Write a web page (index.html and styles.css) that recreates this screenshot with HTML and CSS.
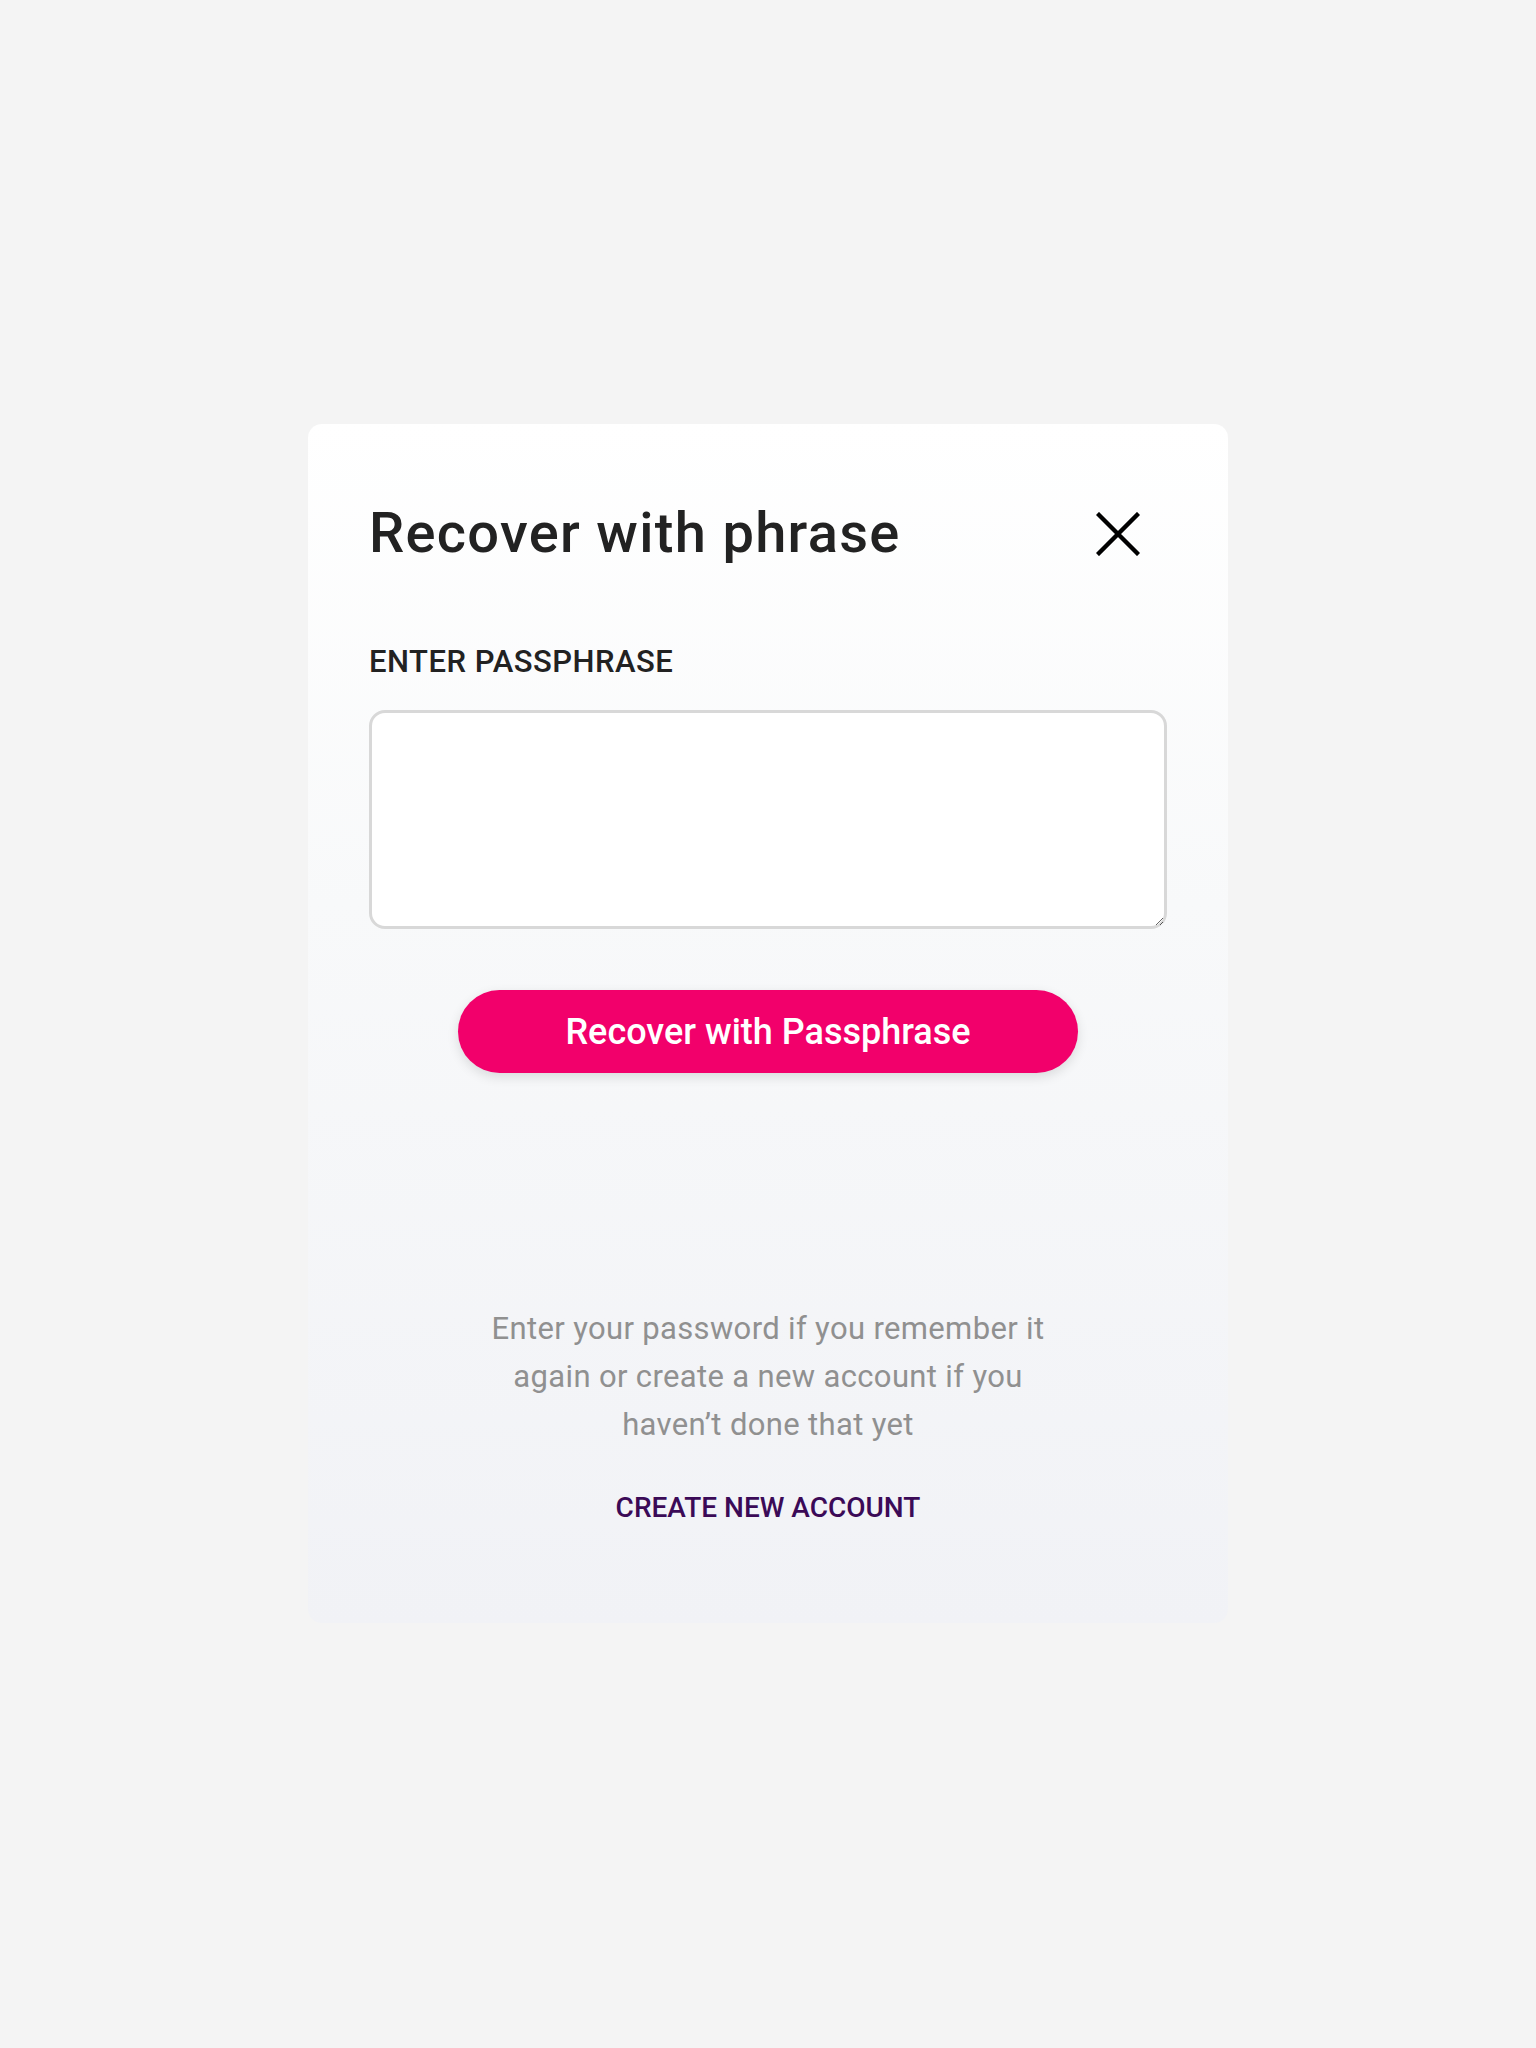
FILE: index.html
```html
<!DOCTYPE html>
<html lang="en">
<head>
<meta charset="utf-8">
<title>Recover with phrase</title>
<link rel="stylesheet" href="styles.css">
</head>
<body>
<main class="page">
  <section class="card">
    <header class="card-header">
      <h1 class="title">Recover with phrase</h1>
      <button class="close" aria-label="Close">
        <svg width="44" height="44" viewBox="0 0 44 44" aria-hidden="true">
          <path d="M3 3 L41 41 M41 3 L3 41" stroke="#000" stroke-width="4.4" stroke-linecap="square" fill="none"/>
        </svg>
      </button>
    </header>
    <label class="label" for="phrase">ENTER PASSPHRASE</label>
    <textarea id="phrase" class="field"></textarea>
    <div class="actions">
      <button class="primary">Recover with Passphrase</button>
    </div>
    <p class="hint">Enter your password if you remember it<br>again or create a new account if you<br>haven’t done that yet</p>
    <a class="link" href="#">CREATE NEW ACCOUNT</a>
  </section>
</main>
</body>
</html>
```
FILE: styles.css
```css
* { box-sizing: border-box; }
html, body { margin: 0; padding: 0; }
body {
  background: #f4f4f4;
  font-family: Roboto, "Noto Sans", "Liberation Sans", sans-serif;
  min-height: 2048px;
}
.page {
  display: flex;
  justify-content: center;
  padding-top: 424px;
}
.card {
  width: 920px;
  background: linear-gradient(180deg, #ffffff 0%, #f8f9fa 40%, #f1f2f6 100%);
  border-radius: 14px;
  padding: 76px 61px 98px 61px;
  display: flex;
  flex-direction: column;
}
.card-header {
  display: flex;
  align-items: center;
  justify-content: space-between;
}
.title {
  margin: 0;
  font-size: 56px;
  line-height: 67px;
  font-weight: 500;
  color: #222222;
  letter-spacing: 1.3px;
}
.close {
  background: none;
  border: 0;
  padding: 0;
  margin-right: 27px;
  width: 44px;
  height: 44px;
  display: flex;
  cursor: pointer;
}
.label {
  margin-top: 77px;
  font-size: 31px;
  line-height: 36px;
  font-weight: 500;
  letter-spacing: 0.5px;
  color: #222222;
}
.field {
  margin-top: 30px;
  width: 100%;
  height: 219px;
  border: 3.5px solid #d8d8d8;
  border-radius: 16px;
  background: #ffffff;
  font-family: inherit;
  font-size: 28px;
  padding: 16px;
  outline: none;
}
.actions {
  margin-top: 61px;
  display: flex;
  justify-content: center;
}
.primary {
  width: 620px;
  height: 83px;
  border: 0;
  border-radius: 42px;
  background: #f2006b;
  color: #ffffff;
  font-family: inherit;
  font-size: 36px;
  font-weight: 500;
  box-shadow: 0 4px 12px rgba(0,0,0,0.12);
  cursor: pointer;
}
.hint {
  margin: 232px 0 0 0;
  text-align: center;
  font-size: 31px;
  line-height: 48px;
  font-weight: 400;
  letter-spacing: 0.35px;
  color: #909090;
}
.link {
  margin-top: 42px;
  align-self: center;
  font-size: 28px;
  line-height: 34px;
  font-weight: 500;
  color: #3b0a57;
  text-decoration: none;
}
```
